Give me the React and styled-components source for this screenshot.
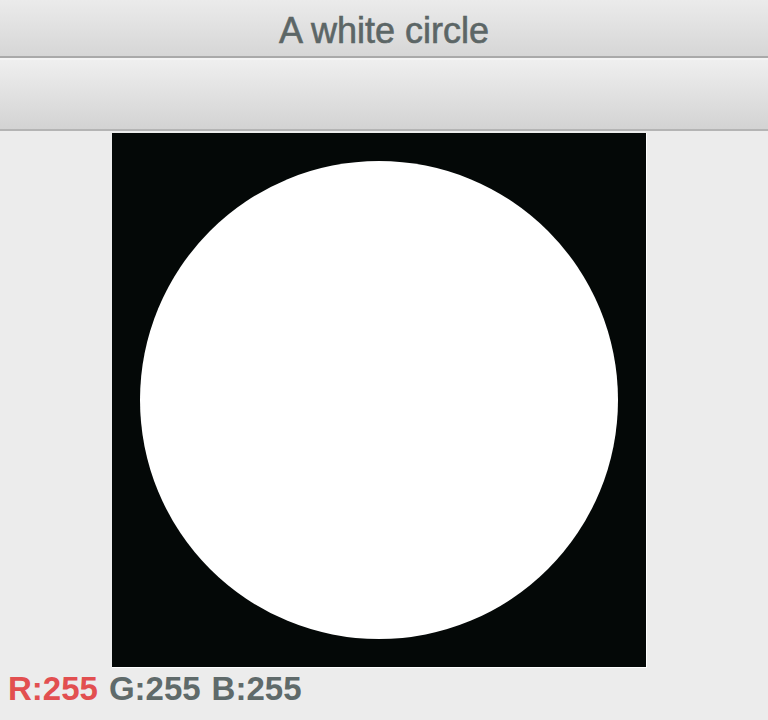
import React from 'react';
import styled, { createGlobalStyle } from 'styled-components';

const GlobalStyle = createGlobalStyle`
  html, body {
    margin: 0;
    padding: 0;
    background: #ececec;
    font-family: "Liberation Sans", Arial, sans-serif;
  }
`;

const Window = styled.div`
  width: 768px;
  height: 720px;
  display: flex;
  flex-direction: column;
  background: #ececec;
  overflow: hidden;
`;

const TitleBar = styled.div`
  height: 58px;
  display: flex;
  align-items: center;
  justify-content: center;
  background: linear-gradient(#ebebeb, #d6d6d6);
  border-bottom: 2px solid #a9a9a9;
  color: #5c6666;
  font-size: 36px;
  -webkit-text-stroke: 0.6px #5c6666;
  padding-top: 6px;
  box-sizing: border-box;
`;

const Toolbar = styled.div`
  height: 73px;
  background: linear-gradient(#efefef, #d3d3d3);
  border-top: 2px solid #f4f4f4;
  border-bottom: 2px solid #b4b4b4;
  box-sizing: border-box;
`;

const Body = styled.div`
  flex: 1;
  display: flex;
  flex-direction: column;
  padding-left: 112px;
  padding-top: 2px;
`;

const Canvas = styled.div`
  width: 534px;
  height: 534px;
  background: #040807;
  border-right: 1px solid #ffffff;
  border-bottom: 1px solid #ffffff;
`;

const Readout = styled.div`
  margin-left: -104px;
  margin-top: 2px;
  font-size: 33px;
  font-weight: bold;
  color: #5f6a6a;
  display: flex;
  gap: 11px;
`;

const Channel = styled.span`
  color: ${p => (p.active ? '#e24f50' : '#5f6a6a')};
`;

export default function App() {
  return (
    <Window>
      <GlobalStyle />
      <TitleBar>A white circle</TitleBar>
      <Toolbar />
      <Body>
        <Canvas>
          <svg width="534" height="534" viewBox="0 0 534 534">
            <circle cx="267" cy="267" r="239" fill="#ffffff" />
          </svg>
        </Canvas>
        <Readout>
          <Channel active>R:255</Channel>
          <Channel>G:255</Channel>
          <Channel>B:255</Channel>
        </Readout>
      </Body>
    </Window>
  );
}
